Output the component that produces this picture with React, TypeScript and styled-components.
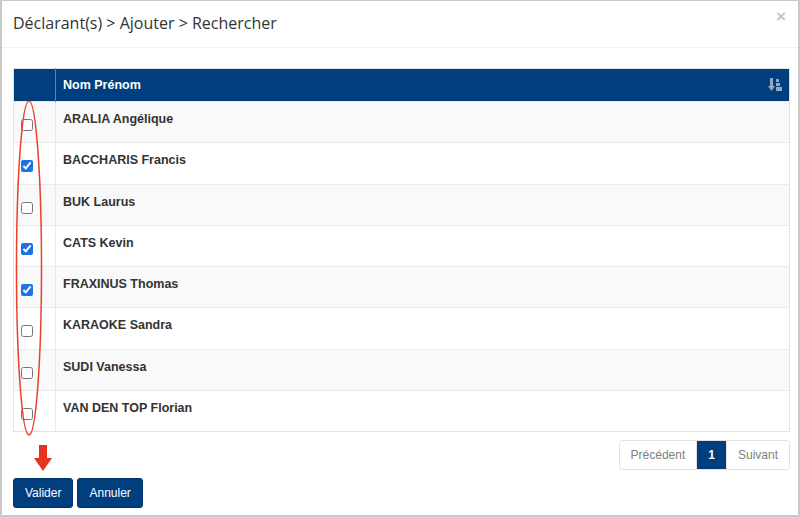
import React from 'react'
import styled, { createGlobalStyle } from 'styled-components'

const GlobalStyle = createGlobalStyle`
  html, body {
    margin: 0;
    padding: 0;
    background: #ffffff;
  }
`

const Modal = styled.div`
  position: relative;
  box-sizing: border-box;
  width: 800px;
  height: 517px;
  border: 2px solid #c9c9c9;
  border-top-width: 1px;
  background: #fff;
  font-family: 'Liberation Sans', Arial, sans-serif;
  color: #333;
`

const Header = styled.div`
  display: flex;
  align-items: center;
  justify-content: space-between;
  height: 46px;
  padding: 0 11px;
  border-bottom: 1px solid #f0f0f0;
`

const Title = styled.h4`
  margin: 0 0 2px;
  font-family: 'Open Sans', 'Noto Sans', sans-serif;
  font-weight: 400;
  font-size: 16px;
  color: #333;
`

const Close = styled.span`
  font-family: 'Liberation Sans', Arial, sans-serif;
  font-weight: 700;
  font-size: 17px;
  color: #c4c4c4;
  margin-top: -14px;
  margin-right: 1px;
`

const Body = styled.div`
  padding: 20px 8px 0 11px;
`

const Table = styled.table`
  width: 100%;
  table-layout: fixed;
  border-collapse: collapse;
  border: 1px solid #e3e3e3;
  font-size: 12.5px;
`

const HeadCell = styled.th<{ $narrow?: boolean }>`
  height: 33px;
  box-sizing: border-box;
  background: #003e7e;
  color: #fff;
  text-align: left;
  padding: 0 7px;
  font-weight: 700;
  width: ${p => (p.$narrow ? '42px' : 'auto')};
  border-left: ${p => (p.$narrow ? 'none' : '1px solid #5d82aa')};
`

const HeadInner = styled.div`
  display: flex;
  align-items: center;
  justify-content: space-between;
`

const Row = styled.tr<{ $striped: boolean }>`
  height: 41.3px;
  background: ${p => (p.$striped ? '#f9f9f9' : '#ffffff')};
  border-top: 1px solid #eaeaea;
`

const CheckCell = styled.td`
  vertical-align: top;
  padding: 0;
`

const NameCell = styled.td`
  vertical-align: top;
  padding: 10px 7px 0;
  font-weight: 700;
  color: #333;
  border-left: 1px solid #eaeaea;
`

const Check = styled.input`
  display: block;
  width: 12px;
  height: 12px;
  margin: 17px 0 0 7px;
  accent-color: #1a73e8;
`

const Footer = styled.div`
  display: flex;
  flex-direction: column;
  padding: 8px 8px 0 11px;
`

const Pager = styled.div`
  display: flex;
  align-self: flex-end;
  border: 1px solid #e1e1e1;
  border-radius: 4px;
  overflow: hidden;
`

const PageItem = styled.span<{ $active?: boolean }>`
  display: flex;
  align-items: center;
  justify-content: center;
  height: 28px;
  padding: 0 11px;
  font-size: 12px;
  color: ${p => (p.$active ? '#fff' : '#808080')};
  background: ${p => (p.$active ? '#003e7e' : '#fff')};
  font-weight: ${p => (p.$active ? 700 : 400)};
  & + & {
    border-left: 1px solid #e1e1e1;
  }
`

const Actions = styled.div`
  display: flex;
  gap: 4px;
  margin-top: 8px;
`

const Button = styled.button`
  height: 30px;
  padding: 0 11px;
  border: 1px solid #00336a;
  border-radius: 3px;
  background: #003e7e;
  color: #fff;
  font-family: 'Liberation Sans', Arial, sans-serif;
  font-size: 12px;
`

const Annotation = styled.svg`
  position: absolute;
  left: 0;
  top: 0;
  pointer-events: none;
`

const people = [
  { name: 'ARALIA Angélique', checked: false },
  { name: 'BACCHARIS Francis', checked: true },
  { name: 'BUK Laurus', checked: false },
  { name: 'CATS Kevin', checked: true },
  { name: 'FRAXINUS Thomas', checked: true },
  { name: 'KARAOKE Sandra', checked: false },
  { name: 'SUDI Vanessa', checked: false },
  { name: 'VAN DEN TOP Florian', checked: false },
]

function SortIcon() {
  return (
    <svg width="14" height="14" viewBox="0 0 14 14" fill="#93a9c3">
      <rect x="2" y="0" width="3" height="9" />
      <polygon points="0,8 7,8 3.5,13" />
      <rect x="8" y="1" width="3" height="3" />
      <rect x="8" y="5" width="4" height="3" />
      <rect x="8" y="9" width="6" height="4" />
    </svg>
  )
}

export default function App() {
  return (
    <>
      <GlobalStyle />
      <Modal>
        <Header>
          <Title>Déclarant(s) &gt; Ajouter &gt; Rechercher</Title>
          <Close>×</Close>
        </Header>
        <Body>
          <Table>
            <thead>
              <tr>
                <HeadCell $narrow />
                <HeadCell>
                  <HeadInner>
                    Nom Prénom
                    <SortIcon />
                  </HeadInner>
                </HeadCell>
              </tr>
            </thead>
            <tbody>
              {people.map((p, i) => (
                <Row key={p.name} $striped={i % 2 === 0}>
                  <CheckCell>
                    <Check type="checkbox" defaultChecked={p.checked} />
                  </CheckCell>
                  <NameCell>{p.name}</NameCell>
                </Row>
              ))}
            </tbody>
          </Table>
        </Body>
        <Footer>
          <Pager>
            <PageItem>Précédent</PageItem>
            <PageItem $active>1</PageItem>
            <PageItem>Suivant</PageItem>
          </Pager>
          <Actions>
            <Button>Valider</Button>
            <Button>Annuler</Button>
          </Actions>
        </Footer>
        <Annotation width="800" height="517">
          <ellipse cx="27" cy="267" rx="12.5" ry="167" fill="none" stroke="#e8402a" strokeWidth="1.5" />
          <rect x="37" y="444" width="8" height="15" fill="#e8341c" />
          <polygon points="32,457 50,457 41,470" fill="#e8341c" />
        </Annotation>
      </Modal>
    </>
  )
}
